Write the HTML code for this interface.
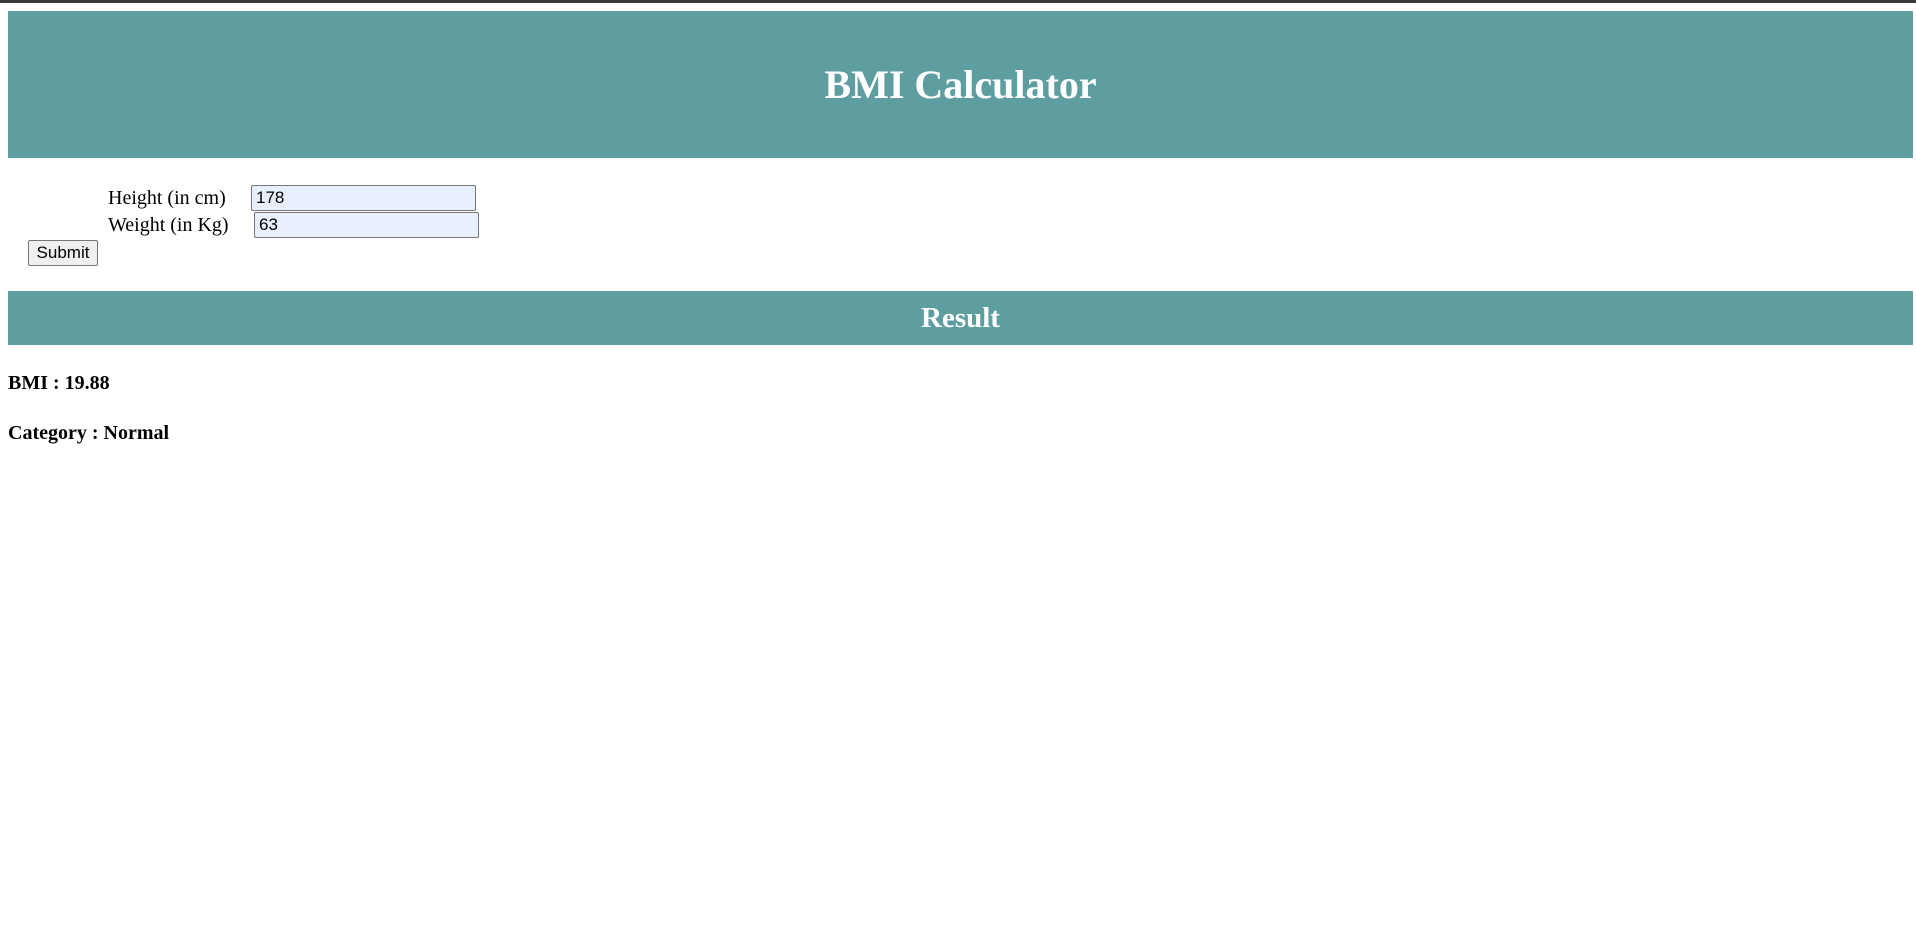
<!DOCTYPE html>
<html><head><style>
body{margin:0;background:#fff;width:1916px;height:951px;position:relative;overflow:hidden;font-family:"Liberation Serif",serif;}
.top{position:absolute;left:0;top:0;width:1916px;height:3px;background:#3a3a3c;}
.hdr{position:absolute;left:8px;top:11px;width:1905px;height:147px;background:#5f9ea0;color:#fff;font-weight:bold;font-size:40px;text-align:center;line-height:147px;}
.res{position:absolute;left:8px;top:291px;width:1905px;height:54px;background:#5f9ea0;color:#fff;font-weight:bold;font-size:29px;text-align:center;line-height:54px;}
.lbl{position:absolute;font-size:20px;line-height:22px;}
.inp{position:absolute;border:1px solid #767676;border-radius:2px;background:#e8f0fe;font-family:"Liberation Sans",sans-serif;font-size:17px;line-height:24px;padding-left:4px;box-sizing:border-box;width:225px;height:26px;}
.btn{position:absolute;left:28px;top:240px;width:70px;height:26px;box-sizing:border-box;border:1px solid #767676;border-radius:2px;background:#efefef;font-family:"Liberation Sans",sans-serif;font-size:17px;text-align:center;line-height:24px;}
.b{position:absolute;left:8px;font-weight:bold;font-size:20px;line-height:22px;}
</style></head><body>
<div class="top"></div>
<div class="hdr">BMI Calculator</div>
<div class="lbl" style="left:108px;top:187px">Height (in cm)</div>
<div class="inp" style="left:251px;top:185px">178</div>
<div class="lbl" style="left:108px;top:214px">Weight (in Kg)</div>
<div class="inp" style="left:254px;top:212px">63</div>
<div class="btn">Submit</div>
<div class="res">Result</div>
<div class="b" style="top:372px">BMI : 19.88</div>
<div class="b" style="top:422px">Category : Normal</div>
</body></html>
